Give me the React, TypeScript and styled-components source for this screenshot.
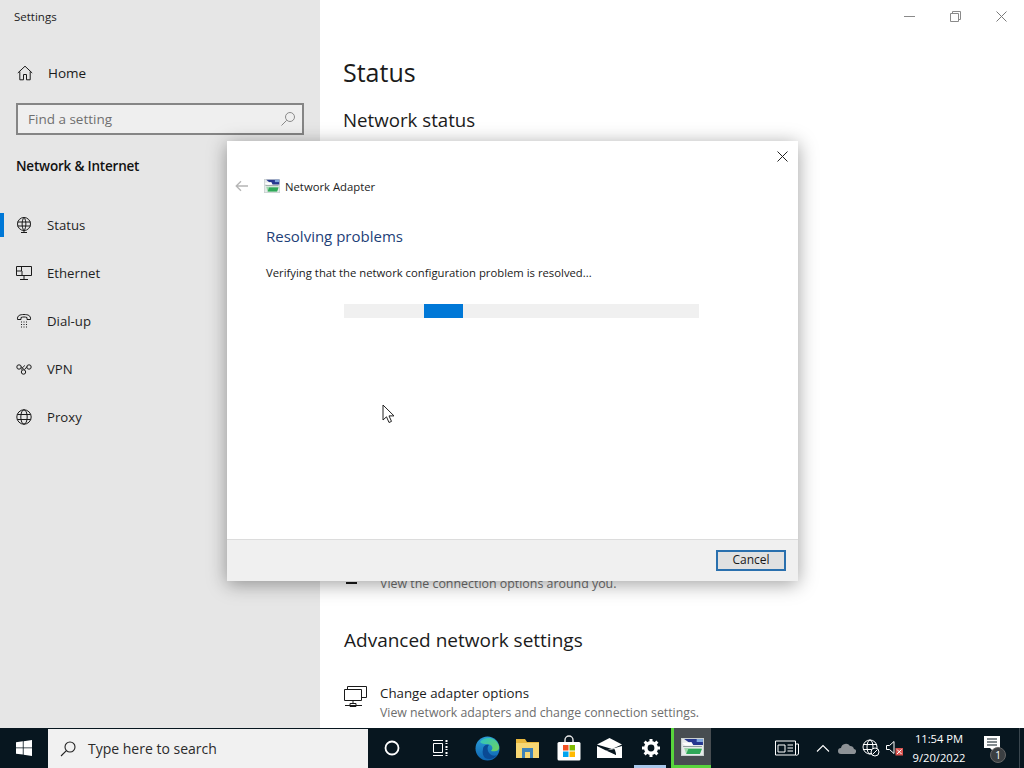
import React from 'react';
import styled, { createGlobalStyle } from 'styled-components';

const GlobalStyle = createGlobalStyle`
  html, body {
    margin: 0;
    padding: 0;
    width: 1024px;
    height: 768px;
    overflow: hidden;
    background: #fff;
    font-family: "Open Sans", "Noto Sans", "Liberation Sans", sans-serif;
  }
`;

const Screen = styled.div`
  position: relative;
  width: 1024px;
  height: 768px;
  display: flex;
  flex-direction: column;
  overflow: hidden;
`;

const Desktop = styled.div`
  flex: 1;
  min-height: 0;
  display: flex;
`;

const Sidebar = styled.aside`
  width: 320px;
  flex: none;
  background: #e6e6e6;
  display: flex;
  flex-direction: column;
`;

const AppTitle = styled.div`
  height: 34px;
  padding-left: 14px;
  font-size: 11.5px;
  line-height: 34px;
  color: #222;
`;

const HomeRow = styled.div`
  height: 48px;
  margin-top: 15px;
  display: flex;
  align-items: center;
  gap: 15px;
  padding-left: 17px;
  font-size: 13.5px;
  color: #1a1a1a;
`;

const SearchField = styled.div`
  height: 28px;
  margin: 6px 16px 0;
  border: 2px solid #858585;
  background: #efefef;
  display: flex;
  align-items: center;
  justify-content: space-between;
  padding: 0 6px 0 10px;
  font-size: 13.5px;
  color: #6f6f6f;
`;

const SectionName = styled.div`
  margin: 20px 0 0 16px;
  height: 22px;
  line-height: 22px;
  font-size: 13.5px;
  font-weight: 600;
  letter-spacing: -0.2px;
  color: #111;
`;

const NavList = styled.nav`
  margin-top: 24px;
  display: flex;
  flex-direction: column;
`;

const NavItem = styled.div<{ $active?: boolean }>`
  position: relative;
  height: 48px;
  display: flex;
  align-items: center;
  gap: 15px;
  padding-left: 16px;
  font-size: 13.2px;
  color: #1f1f1f;

  &::before {
    content: '';
    display: ${p => (p.$active ? 'block' : 'none')};
    position: absolute;
    left: 0;
    top: 12px;
    width: 4px;
    height: 24px;
    background: #0078d7;
  }
`;

const NavGlyph = styled.svg`
  width: 16px;
  height: 16px;
  flex: none;
  fill: none;
  stroke: #1a1a1a;
  stroke-width: 1;
`;

const Main = styled.main`
  flex: 1;
  min-width: 0;
  background: #fff;
  display: flex;
  flex-direction: column;
  padding-left: 23px;
`;

const WindowControls = styled.div`
  height: 33px;
  display: flex;
  justify-content: flex-end;
  align-items: center;
  gap: 35px;
  padding-right: 17px;
`;

const PageTitle = styled.h1`
  margin: 19px 0 0;
  height: 40px;
  line-height: 40px;
  font-size: 25px;
  font-weight: 400;
  color: #1b1b1b;
`;

const SectionTitle = styled.h2`
  margin: 13px 0 0;
  height: 30px;
  line-height: 30px;
  font-size: 18.7px;
  font-weight: 400;
  color: #1b1b1b;
`;

const Hidden = styled.div`
  flex: 1;
`;

const NearbyRow = styled.div`
  display: flex;
  align-items: flex-start;
  padding-left: 3px;
`;

const NearbyIcon = styled.div`
  width: 11px;
  height: 2px;
  margin: 8px 23px 0 0;
  background: #1a1a1a;
`;

const OptionText = styled.div`
  font-size: 12.4px;
  line-height: 20px;
  color: #6e6e6e;
`;

const AdvancedTitle = styled(SectionTitle)`
  margin: 31px 0 0 1px;
  font-size: 19px;
`;

const OptionRow = styled.div`
  margin: 28px 0 6px 1px;
  display: flex;
  gap: 13px;
`;

const AdapterGlyph = styled.svg`
  width: 23px;
  height: 24px;
  margin-top: 1px;
  flex: none;
  fill: none;
  stroke: #1a1a1a;
`;

const OptionName = styled.div`
  font-size: 13.3px;
  line-height: 20px;
  color: #1b1b1b;
`;

const OptionHint = styled.div`
  font-size: 12.3px;
  line-height: 19px;
  color: #6e6e6e;
`;

const Dialog = styled.section`
  position: absolute;
  left: 227px;
  top: 141px;
  width: 571px;
  height: 440px;
  background: #fff;
  box-shadow: 0 3px 18px rgba(0, 0, 0, 0.38);
  display: flex;
  flex-direction: column;
`;

const DialogTop = styled.div`
  height: 30px;
  display: flex;
  justify-content: flex-end;
  align-items: center;
  padding-right: 10px;
`;

const DialogHeader = styled.div`
  height: 30px;
  display: flex;
  align-items: center;
  padding-left: 8px;
  font-size: 11.3px;
  color: #222;
`;

const BackArrow = styled.svg`
  width: 14px;
  height: 12px;
  margin-right: 15px;
  fill: none;
  stroke: #b5b5b5;
  stroke-width: 1.3;
`;

const DialogName = styled.span`
  margin-left: 5px;
`;

const DialogBody = styled.div`
  flex: 1;
  padding: 0 39px;
`;

const Heading = styled.div`
  margin-top: 23px;
  height: 24px;
  line-height: 24px;
  font-size: 15px;
  color: #1e3f78;
`;

const Message = styled.div`
  margin-top: 15px;
  height: 20px;
  line-height: 20px;
  font-size: 11.3px;
  color: #1a1a1a;
`;

const Track = styled.div`
  width: 355px;
  height: 14px;
  margin: 21px 0 0 78px;
  background: #f0f0f0;
`;

const Chunk = styled.div`
  width: 39px;
  height: 14px;
  margin-left: 80px;
  background: #0078d7;
`;

const DialogFooter = styled.div`
  height: 42px;
  box-sizing: border-box;
  border-top: 1px solid #dcdcdc;
  background: #f0f0f0;
  display: flex;
  align-items: center;
  justify-content: flex-end;
  padding: 0 12px 1px 0;
`;

const CancelButton = styled.button`
  width: 70px;
  height: 21px;
  box-sizing: border-box;
  padding: 0;
  border: 2px solid #2a70ae;
  background: #e1e1e1;
  font-family: inherit;
  font-size: 12px;
  line-height: 16px;
  color: #1a1a1a;
`;

const Pointer = styled.svg`
  position: absolute;
  left: 382px;
  top: 404px;
  width: 14px;
  height: 20px;
`;

const Taskbar = styled.footer`
  height: 40px;
  flex: none;
  background: #07161f;
  display: flex;
  align-items: stretch;
  color: #fff;
`;

const Slot = styled.div<{ $w: number; $running?: boolean; $shift?: number }>`
  position: relative;
  width: ${p => p.$w}px;
  box-sizing: border-box;
  padding-left: ${p => p.$shift ?? 0}px;
  flex: none;
  display: flex;
  align-items: center;
  justify-content: center;

  &::after {
    content: '';
    display: ${p => (p.$running ? 'block' : 'none')};
    position: absolute;
    left: 4px;
    right: 5px;
    bottom: 0;
    height: 3px;
    background: #a8c7ea;
  }
`;

const ActiveSlot = styled(Slot)`
  background: #474d51;
  border-left: 3px solid #58d43c;
  border-bottom: 3px solid #58d43c;
`;

const TaskSearch = styled.div`
  width: 320px;
  flex: none;
  box-sizing: border-box;
  margin-top: 1px;
  background: #f1f1f1;
  display: flex;
  align-items: center;
  gap: 12px;
  padding-left: 12px;
  font-size: 14px;
  color: #2b2b2b;
`;

const Spacer = styled.div`
  flex: 1;
`;

const TrayGap = styled.div`
  width: 10px;
  flex: none;
`;

const Clock = styled.div`
  width: 64px;
  flex: none;
  align-self: center;
  text-align: center;
  font-size: 11.2px;
  line-height: 19px;
  color: #fff;
`;

const NoticeGlyph = styled.svg`
  width: 16px;
  height: 16px;
  margin: -8px 7px 0 0;
`;

const Badge = styled.span`
  position: absolute;
  right: 13px;
  bottom: 5px;
  width: 16px;
  height: 16px;
  border-radius: 50%;
  background: #3b3f42;
  border: 1px solid #666;
  box-sizing: border-box;
  font-size: 10px;
  line-height: 14px;
  text-align: center;
  color: #fff;
`;

const DesktopPeek = styled.div`
  width: 5px;
  flex: none;
  box-sizing: border-box;
  border-left: 1px solid #3a464e;
`;

const AdapterIcon = ({ width, height }: { width: number; height: number }) => (
  <svg width={width} height={height} viewBox="0 0 22 18" preserveAspectRatio="none">
    <rect width="22" height="18" fill="#c9d0d0" />
    <rect x="1" y="1" width="20" height="16" fill="#e6eaea" />
    <path d="M3 1h18v6H11z" fill="#25378f" />
    <path d="M15 1h6v3h-6z" fill="#7ea6dc" />
    <path d="M1 5l9-1 2 3.500H4z" fill="#fdfdfd" />
    <rect x="2" y="8" width="18" height="1" fill="#8f9c9c" />
    <path d="M3 10h17l-2 6H5z" fill="#9fd9ae" />
    <path d="M7 11h13l-2 5H5z" fill="#2fa858" />
  </svg>
);

const WinClose = ({ color = '#7a7a7a', size = 11 }: { color?: string; size?: number }) => (
  <svg width={size} height={size} viewBox="0 0 11 11" fill="none" stroke={color} strokeWidth="1">
    <path d="M.5.5l10 10M10.5.5l-10 10" />
  </svg>
);

export default function App() {
  return (
    <>
      <GlobalStyle />
      <Screen>
        <Desktop>
          <Sidebar>
            <AppTitle>Settings</AppTitle>
            <HomeRow>
              <NavGlyph viewBox="0 0 16 16">
                <path d="M.8 8L8 1.2 15.2 8M2.8 6.5v8.3h3.7V9.5h3v5.300h3.700V6.500" />
              </NavGlyph>
              Home
            </HomeRow>
            <SearchField>
              Find a setting
              <svg width="16" height="16" viewBox="0 0 16 16" fill="none" stroke="#8a8a8a">
                <circle cx="10" cy="6" r="4.5" />
                <path d="M6.7 9.3L1.5 14.5" />
              </svg>
            </SearchField>
            <SectionName>Network &amp; Internet</SectionName>
            <NavList>
              <NavItem $active>
                <NavGlyph viewBox="0 0 16 16">
                  <circle cx="8" cy="7" r="6.5" />
                  <path d="M8 .5C5.500 3 5.500 11 8 13.500M8 .5c2.500 2.500 2.500 10.500 0 13M1.500 5h13M1.500 9h13M8 13.500V15M5 15.500h6" />
                </NavGlyph>
                Status
              </NavItem>
              <NavItem>
                <NavGlyph viewBox="0 0 16 16">
                  <path d="M.5 1.500h15v9H.5zM8 10.500v4M4 14.500h8M.5 6h5V1.500M6 10.500V6" />
                </NavGlyph>
                Ethernet
              </NavItem>
              <NavItem>
                <NavGlyph viewBox="0 0 16 16">
                  <path d="M1.500 6.500C1 2.500 4 1.500 8 1.500s7 1 6.500 5h-3.500V4.500C9 3.800 7 3.800 5 4.500v2z" />
                  <path d="M5 9h1M7.500 9h1M10 9h1M5 11.500h1M7.500 11.500h1M10 11.500h1M5 14h1M7.500 14h1M10 14h1" />
                </NavGlyph>
                Dial-up
              </NavItem>
              <NavItem>
                <NavGlyph viewBox="0 0 16 16">
                  <circle cx="3" cy="6" r="2.200" />
                  <circle cx="13" cy="6" r="2.200" />
                  <circle cx="7.500" cy="11" r="2.200" />
                  <path d="M5 5.500c1.500 1 3 5 5 1.500.4-.8.700-1.200 1-1.500M6 9C5 7.500 8 5 9 4.500" />
                </NavGlyph>
                VPN
              </NavItem>
              <NavItem>
                <NavGlyph viewBox="0 0 16 16">
                  <circle cx="8" cy="8" r="7.200" />
                  <ellipse cx="8" cy="8" rx="3.200" ry="7.200" />
                  <path d="M1.300 5.500h13.400M1.300 10.500h13.400" />
                </NavGlyph>
                Proxy
              </NavItem>
            </NavList>
          </Sidebar>
          <Main>
            <WindowControls>
              <svg width="11" height="11" viewBox="0 0 11 11" stroke="#8a8a8a"><path d="M0 5.500h11" /></svg>
              <svg width="11" height="11" viewBox="0 0 11 11" fill="none" stroke="#8a8a8a">
                <path d="M.5 2.500h8v8h-8zM2.500 2.500v-2h8v8h-2" />
              </svg>
              <WinClose />
            </WindowControls>
            <PageTitle>Status</PageTitle>
            <SectionTitle>Network status</SectionTitle>
            <Hidden />
            <NearbyRow>
              <NearbyIcon />
              <OptionText>View the connection options around you.</OptionText>
            </NearbyRow>
            <AdvancedTitle>Advanced network settings</AdvancedTitle>
            <OptionRow>
              <AdapterGlyph viewBox="0 0 23 24">
                <path d="M.5 5.500h17v11H.5zM3.500 5.500v-3h19v11h-5M9 16.500v3M1 21.500h17M6 19.500h6v3H6z" />
              </AdapterGlyph>
              <div>
                <OptionName>Change adapter options</OptionName>
                <OptionHint>View network adapters and change connection settings.</OptionHint>
              </div>
            </OptionRow>
          </Main>
        </Desktop>

        <Taskbar>
          <Slot $w={48}>
            <svg width="16" height="16" viewBox="0 0 16 16" fill="#fff">
              <path d="M0 2.300l6.800-1v6.200H0zM7.600 1.200L16 0v7.500H7.600zM0 8.300h6.800v6.300L0 13.700zM7.600 8.300H16V16l-8.400-1.200z" />
            </svg>
          </Slot>
          <TaskSearch>
            <svg width="16" height="16" viewBox="0 0 16 16" fill="none" stroke="#222" strokeWidth="1.100">
              <circle cx="10" cy="6" r="5" />
              <path d="M6.400 9.600L1 15" />
            </svg>
            Type here to search
          </TaskSearch>
          <Slot $w={48}>
            <svg width="16" height="16" viewBox="0 0 16 16" fill="none" stroke="#fff" strokeWidth="1.800">
              <circle cx="8" cy="8" r="6.500" />
            </svg>
          </Slot>
          <Slot $w={47}>
            <svg width="16" height="16" viewBox="0 0 16 16" fill="none" stroke="#fff">
              <path d="M1 .5h10M1 15.500h10M1.500 3.500h9v9h-9z" />
              <path d="M14.500 0v4M14.500 6v4M14.500 12v4" strokeWidth="2" strokeDasharray="2 1" />
            </svg>
          </Slot>
          <Slot $w={44} $shift={4}>
            <svg width="25" height="25" viewBox="0 0 25 25">
              <defs>
                <linearGradient id="edgeBlue" x1="0" y1="0" x2="0" y2="1">
                  <stop offset="0" stopColor="#2c9fd8" />
                  <stop offset="1" stopColor="#0d63b0" />
                </linearGradient>
                <linearGradient id="edgeGreen" x1="0" y1="0" x2="1" y2="1">
                  <stop offset="0" stopColor="#2cc3c8" />
                  <stop offset="1" stopColor="#6fd35a" />
                </linearGradient>
              </defs>
              <circle cx="12.500" cy="12.500" r="12" fill="url(#edgeBlue)" />
              <path d="M5 6C9 0 21 0 24 10c1 5-4 6-8 5 3-3 1-7-4-7-3 0-5 0-7-2z" fill="url(#edgeGreen)" />
              <path d="M8 13c0-3 3-5 6-4-2 2-2 6 1 9 2 2 5 2 7 1-3 4-8 5-12 3-2-2-3-5-2-9z" fill="#0a4a94" />
            </svg>
          </Slot>
          <Slot $w={41}>
            <svg width="23" height="20" viewBox="0 0 23 20">
              <path d="M0 1h9l2 3h12v16H0z" fill="#e8b73c" />
              <rect x="0" y="5" width="23" height="15" fill="#f7d774" />
              <path d="M6 10h11v10h-3v-6H9v6H6z" fill="#3f83b8" />
            </svg>
          </Slot>
          <Slot $w={41}>
            <svg width="24" height="26" viewBox="0 0 24 26">
              <path d="M8 8V5a4 4 0 018 0v3" fill="none" stroke="#e8e8e8" strokeWidth="1.400" />
              <rect x="0.500" y="7" width="23" height="18.500" rx="1.500" fill="#fff" />
              <rect x="6" y="10" width="5.500" height="5.500" fill="#f25022" />
              <rect x="12.500" y="10" width="5.500" height="5.500" fill="#7fba00" />
              <rect x="6" y="16.500" width="5.500" height="5.500" fill="#00a4ef" />
              <rect x="12.500" y="16.500" width="5.500" height="5.500" fill="#ffb900" />
            </svg>
          </Slot>
          <Slot $w={41}>
            <svg width="25" height="20" viewBox="0 0 25 20">
              <path d="M0 6.500L12.500 0 25 6.500 15 11z" fill="#fff" />
              <path d="M0 8l9 4.500L25 8v12H0zM14 13.500l5 3.500-1-5z" fill="#fff" />
              <path d="M9 12.500l10 4.500-1.500-6z" fill="#07161f" />
            </svg>
          </Slot>
          <Slot $w={41} $running>
            <svg width="20" height="20" viewBox="0 0 20 20">
              <circle cx="10" cy="10" r="5.200" fill="none" stroke="#fff" strokeWidth="3.600" />
              <path
                d="M10 1v3M10 16v3M1 10h3M16 10h3M3.600 3.600l2.100 2.100M14.300 14.300l2.100 2.100M3.600 16.400l2.100-2.100M14.300 5.700l2.100-2.100"
                stroke="#fff"
                strokeWidth="3"
              />
            </svg>
          </Slot>
          <ActiveSlot $w={40}>
            <AdapterIcon width={23} height={18} />
          </ActiveSlot>
          <Spacer />
          <Slot $w={28}>
            <svg width="24" height="16" viewBox="0 0 24 16" fill="none" stroke="#fff">
              <path d="M.5 1h20v14H.5zM20.500 4h3v9a2 2 0 01-3 2M3 5h7v7H3zM12.500 5h5.500M12.500 8h5.500M12.500 11h5.500" />
            </svg>
          </Slot>
          <TrayGap />
          <Slot $w={24}>
            <svg width="14" height="8" viewBox="0 0 14 8" fill="none" stroke="#fff" strokeWidth="1.100"><path d="M1 7.500L7 1.500l6 6" /></svg>
          </Slot>
          <Slot $w={24}>
            <svg width="18" height="12" viewBox="0 0 18 12" fill="#8d9296">
              <path d="M3 12a3 3 0 010-6 5 5 0 019-2 4 4 0 014 3 2.500 2.500 0 01-1 5z" />
            </svg>
          </Slot>
          <Slot $w={24}>
            <svg width="18" height="18" viewBox="0 0 18 18" fill="none" stroke="#fff">
              <circle cx="8" cy="8" r="7" />
              <ellipse cx="8" cy="8" rx="3" ry="7" />
              <path d="M1 5.500h14M1 10.500h14" />
              <circle cx="13" cy="13" r="4" fill="#07161f" />
              <path d="M10.500 15.500l5-5" />
            </svg>
          </Slot>
          <Slot $w={24}>
            <svg width="18" height="16" viewBox="0 0 18 16">
              <path d="M.5 5.500h3L8 1.500v12l-4.500-4h-3z" fill="none" stroke="#fff" />
              <rect x="9.500" y="8" width="7.500" height="7.500" fill="#d9534f" />
              <path d="M11 9.500l4.500 4.500M15.500 9.500L11 14" stroke="#fff" />
            </svg>
          </Slot>
          <Clock>
            11:54 PM
            <br />
            9/20/2022
          </Clock>
          <Slot $w={48}>
            <NoticeGlyph viewBox="0 0 16 16">
              <path d="M0 0h16v12h-6v4l-4-4H0z" fill="#fff" />
              <path d="M3 3h10M3 6h10M3 9h10" stroke="#07161f" />
            </NoticeGlyph>
            <Badge>1</Badge>
          </Slot>
          <DesktopPeek />
        </Taskbar>

        <Dialog>
          <DialogTop>
            <WinClose color="#222" size={11} />
          </DialogTop>
          <DialogHeader>
            <BackArrow viewBox="0 0 14 12">
              <path d="M13 6H1.500M6 1.200L1.200 6 6 10.800" />
            </BackArrow>
            <AdapterIcon width={16} height={14} />
            <DialogName>Network Adapter</DialogName>
          </DialogHeader>
          <DialogBody>
            <Heading>Resolving problems</Heading>
            <Message>Verifying that the network configuration problem is resolved...</Message>
            <Track>
              <Chunk />
            </Track>
          </DialogBody>
          <DialogFooter>
            <CancelButton>Cancel</CancelButton>
          </DialogFooter>
        </Dialog>

        <Pointer viewBox="0 0 14 20">
          <path d="M1 1v15l3.500-3.200 2.500 5.700 2.500-1.100-2.500-5.500H12z" fill="#fff" stroke="#222" />
        </Pointer>
      </Screen>
    </>
  );
}
